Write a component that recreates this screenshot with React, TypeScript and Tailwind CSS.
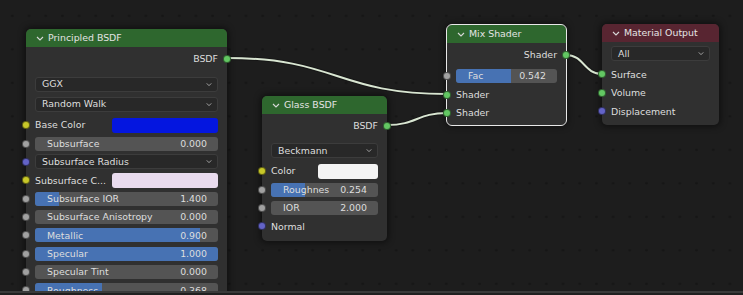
import React, { type ReactNode } from 'react';

const SOCK = {
  green: 'bg-[#63c763]',
  yellow: 'bg-[#c7c729]',
  gray: 'bg-[#a1a1a1]',
  purple: 'bg-[#6363c7]',
};

type SockColor = keyof typeof SOCK;

const Socket = ({ color, side }: { color: SockColor; side: 'in' | 'out' }) => (
  <span
    className={`absolute top-1/2 -translate-y-1/2 w-[8px] h-[8px] rounded-full border border-black/50 ${SOCK[color]} ${
      side === 'in' ? 'left-[-4px]' : 'right-[-4px]'
    }`}
  />
);

const Chevron = ({ className = '' }: { className?: string }) => (
  <svg width="8" height="5" viewBox="0 0 8 5" className={className}>
    <polyline points="1,1 4,4 7,1" fill="none" stroke="currentColor" strokeWidth="1.1" />
  </svg>
);

interface NodeProps {
  left: string;
  top: string;
  width: string;
  title: string;
  header: string;
  pb: string;
  selected?: boolean;
  children: ReactNode;
}

const Node = ({ left, top, width, title, header, pb, selected, children }: NodeProps) => (
  <div
    className={`absolute ${left} ${top} ${width} rounded-[5px] bg-[#303030] shadow-[0_0_6px_2px_rgba(0,0,0,0.45)] ${
      selected ? 'outline outline-1 outline-[#e8e8e8]' : ''
    }`}
  >
    <div className={`h-[18px] rounded-t-[5px] ${header} flex items-center pl-[10px] gap-[3px] text-[#e4e4e4]`}>
      <Chevron className="text-[#d8d8d8]" />
      <span className="ml-[1px]">{title}</span>
    </div>
    <div className={`flex flex-col px-[9px] ${pb}`}>{children}</div>
  </div>
);

const Output = ({ label }: { label: string }) => (
  <div className="relative h-[18px] mt-[3px] -mx-[9px] px-[9px] flex items-center justify-end">
    <span>{label}</span>
    <Socket color="green" side="out" />
  </div>
);

const Dropdown = ({ label, sock, rowH = 'h-[20px]' }: { label: string; sock?: SockColor; rowH?: string }) => (
  <div className={`relative ${rowH} -mx-[9px] px-[9px] flex items-center`}>
    {sock && <Socket color={sock} side="in" />}
    <div className="w-full h-[15px] rounded-[3px] bg-[#282828] border border-[#3c3c3c] flex items-center justify-between pl-[6px] pr-[4px]">
      <span>{label}</span>
      <Chevron className="text-[#bdbdbd] scale-75" />
    </div>
  </div>
);

const Slider = ({ label, value, frac, sock = 'gray' }: { label: string; value: string; frac: number; sock?: SockColor }) => (
  <div className="relative h-[18.35px] -mx-[9px] px-[9px] flex items-center">
    <Socket color={sock} side="in" />
    <div className="relative w-full h-[14px] rounded-[3px] bg-[#545454] overflow-hidden flex items-center justify-between pl-[12px] pr-[11px]">
      <div className="absolute left-0 top-0 bottom-0 bg-[#4772b3]" style={{ width: `${frac * 100}%` }} />
      <span className="relative">{label}</span>
      <span className="relative">{value}</span>
    </div>
  </div>
);

const ColorRow = ({ label, swatch, swW }: { label: string; swatch: string; swW: string }) => (
  <div className="relative h-[18.35px] -mx-[9px] px-[9px] flex items-center justify-between">
    <Socket color="yellow" side="in" />
    <span>{label}</span>
    <div className={`${swW} h-[15px] rounded-[3px] ${swatch}`} />
  </div>
);

const Input = ({ label, sock, rowH = 'h-[18.35px]' }: { label: string; sock: SockColor; rowH?: string }) => (
  <div className={`relative ${rowH} -mx-[9px] px-[9px] flex items-center`}>
    <Socket color={sock} side="in" />
    <span>{label}</span>
  </div>
);

const Links = () => (
  <svg className="absolute inset-0" width="743" height="291" viewBox="0 0 743 291">
    {[
      'M227 58 C 337 58, 337 94, 447 94',
      'M387 125 C 417 125, 417 113, 447 113',
      'M566 55 C 584 55, 584 74, 602 74',
    ].map((d) => (
      <g key={d}>
        <path d={d} fill="none" stroke="#161616" strokeWidth="4" />
        <path d={d} fill="none" stroke="#d9e6d2" strokeWidth="2" />
      </g>
    ))}
  </svg>
);

export default function App() {
  return (
    <div className="w-[743px] h-[295px] flex flex-col bg-[#1d1d1d] overflow-hidden font-['DejaVu_Sans',sans-serif] text-[9.4px] text-[#dedede] leading-none">
      <div className="relative h-[291px] overflow-hidden bg-[radial-gradient(circle,#161616_1px,transparent_1.6px)] bg-[length:16.7px_33.5px] bg-[position:4px_-1px]">
        <Links />

        <Node left="left-[26px]" top="top-[29px]" width="w-[201px]" title="Principled BSDF" header="bg-[#2e672e]" pb="pb-[8px]">
          <Output label="BSDF" />
          <div className="h-[6px]" />
          <Dropdown label="GGX" />
          <Dropdown label="Random Walk" />
          <div className="h-[2px]" />
          <ColorRow label="Base Color" swatch="bg-[#0416e0]" swW="w-[106px]" />
          <Slider label="Subsurface" value="0.000" frac={0} />
          <Dropdown label="Subsurface Radius" sock="purple" rowH="h-[18.35px]" />
          <ColorRow label="Subsurface C..." swatch="bg-[#e9dbee]" swW="w-[106px]" />
          <Slider label="Subsurface IOR" value="1.400" frac={0.13} />
          <Slider label="Subsurface Anisotropy" value="0.000" frac={0} />
          <Slider label="Metallic" value="0.900" frac={0.9} />
          <Slider label="Specular" value="1.000" frac={1} />
          <Slider label="Specular Tint" value="0.000" frac={0} />
          <Slider label="Roughness" value="0.368" frac={0.368} />
        </Node>

        <Node left="left-[262px]" top="top-[96px]" width="w-[125px]" title="Glass BSDF" header="bg-[#2e672e]" pb="pb-[6px]">
          <Output label="BSDF" />
          <div className="h-[6px]" />
          <Dropdown label="Beckmann" rowH="h-[19px]" />
          <div className="h-[2px]" />
          <ColorRow label="Color" swatch="bg-[#f4f4f4]" swW="w-[60px]" />
          <Slider label="Roughnes" value="0.254" frac={0.32} />
          <Slider label="IOR" value="2.000" frac={0} />
          <Input label="Normal" sock="purple" />
        </Node>

        <Node left="left-[447px]" top="top-[25px]" width="w-[119px]" title="Mix Shader" header="bg-[#2e672e]" pb="pb-[3px]" selected>
          <Output label="Shader" />
          <div className="h-[3px]" />
          <Slider label="Fac" value="0.542" frac={0.542} />
          <Input label="Shader" sock="green" />
          <Input label="Shader" sock="green" />
        </Node>

        <Node left="left-[602px]" top="top-[24px]" width="w-[117px]" title="Material Output" header="bg-[#582531]" pb="pb-[4px]">
          <div className="h-[3px]" />
          <Dropdown label="All" rowH="h-[17px]" />
          <div className="h-[3px]" />
          <Input label="Surface" sock="green" rowH="h-[18.6px]" />
          <Input label="Volume" sock="green" rowH="h-[18.6px]" />
          <Input label="Displacement" sock="purple" rowH="h-[18.6px]" />
        </Node>
      </div>
      <div className="h-[2px] bg-[#3a3a3a]" />
      <div className="flex-1 bg-[#202020]" />
    </div>
  );
}
